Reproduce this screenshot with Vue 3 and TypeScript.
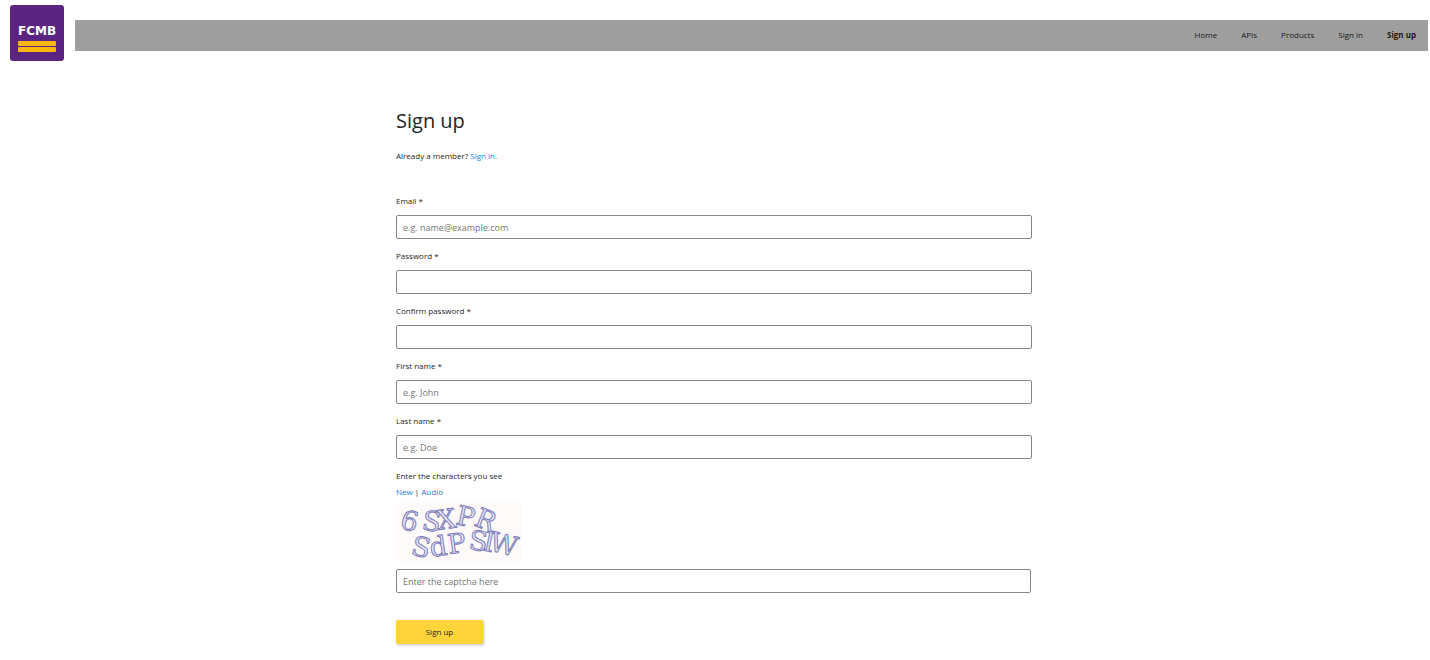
<script setup lang="ts">
import { reactive } from 'vue'

interface Field {
  id: string
  label: string
  type: string
  placeholder: string
}

interface NavItem {
  label: string
  current?: boolean
}

const navItems: NavItem[] = [
  { label: 'Home' },
  { label: 'APIs' },
  { label: 'Products' },
  { label: 'Sign in' },
  { label: 'Sign up', current: true },
]

const fields: Field[] = [
  { id: 'email', label: 'Email *', type: 'email', placeholder: 'e.g. name@example.com' },
  { id: 'password', label: 'Password *', type: 'password', placeholder: '' },
  { id: 'confirm', label: 'Confirm password *', type: 'password', placeholder: '' },
  { id: 'first', label: 'First name *', type: 'text', placeholder: 'e.g. John' },
  { id: 'last', label: 'Last name *', type: 'text', placeholder: 'e.g. Doe' },
]

const form = reactive<Record<string, string>>({
  email: '',
  password: '',
  confirm: '',
  first: '',
  last: '',
  captcha: '',
})
</script>

<template>
  <div class="page">
    <header class="header">
      <a href="#" class="logo" aria-label="FCMB">
        <svg viewBox="0 0 54 56" width="54" height="56">
          <rect width="54" height="56" rx="3" fill="#5c2482" />
          <text x="27" y="30" text-anchor="middle" class="logo-text">FCMB</text>
          <rect x="8" y="36" width="38" height="5" rx="1" fill="#fdb60d" />
          <rect x="8" y="42" width="38" height="5" rx="1" fill="#fdb60d" />
        </svg>
      </a>
      <nav class="nav">
        <a
          v-for="item in navItems"
          :key="item.label"
          href="#"
          :class="{ current: item.current }"
        >{{ item.label }}</a>
      </nav>
    </header>

    <main class="content">
      <h1>Sign up</h1>
      <p class="member">Already a member? <a href="#">Sign in.</a></p>

      <form @submit.prevent>
        <div v-for="field in fields" :key="field.id" class="field">
          <label :for="field.id">{{ field.label }}</label>
          <input
            :id="field.id"
            v-model="form[field.id]"
            :type="field.type"
            :placeholder="field.placeholder"
          />
        </div>

        <div class="captcha">
          <label for="captcha">Enter the characters you see</label>
          <div class="captcha-links"><a href="#">New</a> | <a href="#">Audio</a></div>
          <svg class="captcha-image" viewBox="0 0 125 58" width="125" height="58" role="img" aria-label="Captcha">
            <rect width="125" height="58" fill="#fffafa" />
            <text x="3 25 42 59 77" y="25 26 27 21 22" rotate="14 10 -8 12 22">6SXPR</text>
            <text x="14 35 53 72 86 92" y="51 54 51 46 47 47" rotate="14 -8 -8 8 12 14">SdPSIW</text>
          </svg>
          <input id="captcha" v-model="form.captcha" type="text" placeholder="Enter the captcha here" />
        </div>

        <button type="submit">Sign up</button>
      </form>
    </main>
  </div>
</template>

<style>
body {
  margin: 0;
  background: #fff;
}
</style>

<style scoped>
.page {
  padding: 5px 2px 16px 0;
  font-family: 'Open Sans', 'Noto Sans', sans-serif;
  font-size: 8px;
  line-height: 16px;
  color: #212529;
}

a {
  color: #1780e0;
  text-decoration: none;
}

.header {
  display: flex;
  align-items: center;
  gap: 11px;
  padding-left: 10px;
}

.logo {
  display: block;
  height: 56px;
}

.logo svg {
  display: block;
}

.logo-text {
  font-family: 'DejaVu Sans', sans-serif;
  font-size: 12px;
  font-weight: 700;
  fill: #fff;
}

.nav {
  flex: 1;
  display: flex;
  justify-content: flex-end;
  align-items: center;
  gap: 24px;
  height: 31px;
  margin-top: 4px;
  padding-right: 12px;
  background: #9e9e9e;
}

.nav a {
  color: #1c1c1c;
}

.nav .current {
  font-weight: 700;
}

.content {
  max-width: 636px;
  margin: 0 auto;
}

h1 {
  margin: 46px 0 0;
  font-size: 20px;
  font-weight: 400;
  line-height: 28px;
}

.member {
  margin: 13px 0 29px;
}

.field {
  margin-bottom: 9px;
}

label {
  display: block;
  margin-bottom: 6px;
}

input {
  display: block;
  box-sizing: border-box;
  width: 100%;
  height: 24px;
  padding: 0 6px;
  border: 1px solid #858585;
  border-radius: 2px;
  background: #fff;
  font-family: inherit;
  font-size: 9px;
  color: #212529;
}

input::placeholder {
  color: #757575;
  opacity: 1;
}

.captcha {
  padding-right: 1px;
}

.captcha label {
  margin-bottom: 0;
}

.captcha-image {
  display: block;
  margin: 3px 0 8px;
}

.captcha-image text {
  font-family: 'DejaVu Serif', serif;
  font-size: 27px;
  fill: #e4e4f4;
  stroke: #8080ba;
  stroke-width: 1;
  stroke-linejoin: round;
}

button {
  display: block;
  width: 87px;
  height: 24px;
  margin-top: 27px;
  padding: 0 0 2px;
  border: 0;
  border-radius: 1px;
  background: #ffd43b;
  box-shadow: 1px 1px 3px rgba(0, 0, 0, 0.25);
  font-family: inherit;
  font-size: 8px;
  color: #212529;
}
</style>
